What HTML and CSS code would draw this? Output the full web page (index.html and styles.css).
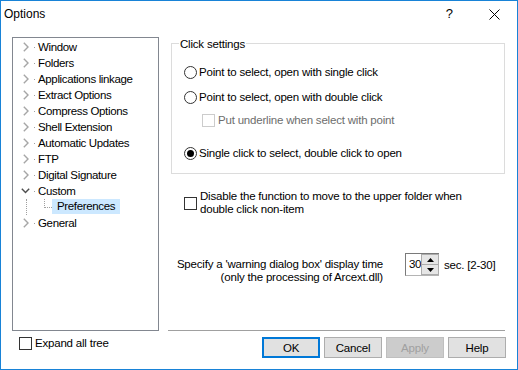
FILE: index.html
```html
<!DOCTYPE html>
<html>
<head>
<meta charset="utf-8">
<link rel="stylesheet" href="styles.css">
</head>
<body>
<div class="window">
  <div class="titlebar">
    <span class="title">Options</span>
    <span class="help">?</span>
    <svg class="close" width="11" height="11" viewBox="0 0 11 11"><path d="M0.5 0.5 L10.5 10.5 M10.5 0.5 L0.5 10.5" stroke="#000" stroke-width="1" fill="none"/></svg>
  </div>
  <div class="main">
    <div class="tree">
      <div class="row"><svg class="chev" width="6" height="10" viewBox="0 0 6 10"><path d="M0.8 0.8 L5 5 L0.8 9.2" stroke="#a6a6a6" stroke-width="1.4" fill="none"/></svg><span class="dot"></span><span>Window</span></div>
      <div class="row"><svg class="chev" width="6" height="10" viewBox="0 0 6 10"><path d="M0.8 0.8 L5 5 L0.8 9.2" stroke="#a6a6a6" stroke-width="1.4" fill="none"/></svg><span class="dot"></span><span>Folders</span></div>
      <div class="row"><svg class="chev" width="6" height="10" viewBox="0 0 6 10"><path d="M0.8 0.8 L5 5 L0.8 9.2" stroke="#a6a6a6" stroke-width="1.4" fill="none"/></svg><span class="dot"></span><span>Applications linkage</span></div>
      <div class="row"><svg class="chev" width="6" height="10" viewBox="0 0 6 10"><path d="M0.8 0.8 L5 5 L0.8 9.2" stroke="#a6a6a6" stroke-width="1.4" fill="none"/></svg><span class="dot"></span><span>Extract Options</span></div>
      <div class="row"><svg class="chev" width="6" height="10" viewBox="0 0 6 10"><path d="M0.8 0.8 L5 5 L0.8 9.2" stroke="#a6a6a6" stroke-width="1.4" fill="none"/></svg><span class="dot"></span><span>Compress Options</span></div>
      <div class="row"><svg class="chev" width="6" height="10" viewBox="0 0 6 10"><path d="M0.8 0.8 L5 5 L0.8 9.2" stroke="#a6a6a6" stroke-width="1.4" fill="none"/></svg><span class="dot"></span><span>Shell Extension</span></div>
      <div class="row"><svg class="chev" width="6" height="10" viewBox="0 0 6 10"><path d="M0.8 0.8 L5 5 L0.8 9.2" stroke="#a6a6a6" stroke-width="1.4" fill="none"/></svg><span class="dot"></span><span>Automatic Updates</span></div>
      <div class="row"><svg class="chev" width="6" height="10" viewBox="0 0 6 10"><path d="M0.8 0.8 L5 5 L0.8 9.2" stroke="#a6a6a6" stroke-width="1.4" fill="none"/></svg><span class="dot"></span><span>FTP</span></div>
      <div class="row"><svg class="chev" width="6" height="10" viewBox="0 0 6 10"><path d="M0.8 0.8 L5 5 L0.8 9.2" stroke="#a6a6a6" stroke-width="1.4" fill="none"/></svg><span class="dot"></span><span>Digital Signature</span></div>
      <div class="row open"><svg class="chev-down" width="9" height="6" viewBox="0 0 9 6"><path d="M0.8 0.8 L4.5 4.6 L8.2 0.8" stroke="#4d4d4d" stroke-width="1.4" fill="none"/></svg><span class="dot"></span><span>Custom</span></div>
      <div class="row child"><span class="vline"></span><span class="elbow"></span><span class="sel">Preferences</span></div>
      <div class="row"><svg class="chev" width="6" height="10" viewBox="0 0 6 10"><path d="M0.8 0.8 L5 5 L0.8 9.2" stroke="#a6a6a6" stroke-width="1.4" fill="none"/></svg><span class="dot"></span><span>General</span></div>
    </div>
    <div class="pane">
      <div class="group">
        <span class="legend">Click settings</span>
        <div class="opt"><span class="radio"></span><span>Point to select, open with single click</span></div>
        <div class="opt r2"><span class="radio"></span><span>Point to select, open with double click</span></div>
        <div class="opt r3 disabled"><span class="check"></span><span>Put underline when select with point</span></div>
        <div class="opt r4"><span class="radio on"></span><span>Single click to select, double click to open</span></div>
      </div>
      <div class="opt multi"><span class="check"></span><span>Disable the function to move to the upper folder when<br>double click non-item</span></div>
      <div class="spec">
        <div class="spec-text">Specify a 'warning dialog box' display time<br>(only the processing of Arcext.dll)</div>
        <div class="spin">
          <span class="spin-edit">30</span>
          <span class="spin-btns">
            <span class="sbtn up"><svg width="7" height="4" viewBox="0 0 7 4"><path d="M3.5 0 L7 4 L0 4Z" fill="#000"/></svg></span>
            <span class="sbtn down"><svg width="7" height="4" viewBox="0 0 7 4"><path d="M0 0 L7 0 L3.5 4Z" fill="#000"/></svg></span>
          </span>
        </div>
        <span class="sec">sec. [2-30]</span>
      </div>
      <div class="sep"></div>
    </div>
  </div>
  <div class="footer">
    <div class="opt expand"><span class="check"></span><span>Expand all tree</span></div>
    <div class="buttons">
      <span class="btn default">OK</span>
      <span class="btn">Cancel</span>
      <span class="btn off">Apply</span>
      <span class="btn">Help</span>
    </div>
  </div>
</div>
</body>
</html>
```
FILE: styles.css
```css
* { box-sizing: border-box; }
body {
  margin: 0;
  font-family: "Liberation Sans", Arial, sans-serif;
  font-size: 11.5px;
  letter-spacing: -0.2px;
  color: #000;
  background: #fff;
}
.window {
  width: 518px;
  height: 370px;
  border: 1px solid #1883d7;
  background: #fff;
  display: flex;
  flex-direction: column;
}
.titlebar {
  height: 30px;
  display: flex;
  align-items: flex-start;
  padding: 5px 17px 0 3px;
  line-height: 16px;
  flex: none;
  letter-spacing: 0;
}
.title { font-size: 12px; }
.help { margin-left: auto; font-size: 13px; }
.close { margin-left: 36px; margin-top: 3px; }

.main {
  display: flex;
  padding: 6px 12px 0 11px;
  flex: none;
}
.tree {
  width: 147px;
  height: 294px;
  border: 1px solid #828790;
  padding-top: 1px;
  flex: none;
  letter-spacing: -0.35px;
}
.row {
  display: flex;
  align-items: center;
  height: 16px;
  line-height: 16px;
  padding-left: 10px;
  white-space: nowrap;
}
.chev { flex: none; }
.dot {
  width: 1px;
  height: 1px;
  background: #a0a0a0;
  margin-left: 5px;
  margin-right: 3px;
  flex: none;
}
.row.open { padding-left: 8px; }
.row.open .dot { margin-left: 4px; }
.chev-down { flex: none; }
.row.child { padding-left: 13px; align-items: flex-start; }
.vline {
  width: 1px;
  height: 16px;
  border-left: 1px dotted #a0a0a0;
  flex: none;
}
.elbow {
  width: 8px;
  height: 9px;
  border-left: 1px dotted #a0a0a0;
  border-bottom: 1px dotted #a0a0a0;
  margin-left: 17px;
  flex: none;
}
.sel {
  background: #cce8ff;
  height: 15px;
  line-height: 15px;
  padding: 0 5px;
}

.pane {
  flex: 1;
  margin-left: 9px;
  height: 294px;
  display: flex;
  flex-direction: column;
}
.group {
  position: relative;
  margin: 6px 0 0 3px;
  height: 131px;
  border: 1px solid #dcdcdc;
  padding: 20px 0 0 12px;
  flex: none;
}
.legend {
  position: absolute;
  top: -8px;
  left: 7px;
  padding: 0 1px;
  background: #fff;
  line-height: 16px;
}
.opt {
  display: flex;
  align-items: center;
  height: 16px;
  line-height: 16px;
  white-space: nowrap;
}
.radio {
  width: 13px;
  height: 13px;
  border: 1px solid #333;
  border-radius: 50%;
  margin-right: 2px;
  flex: none;
  display: flex;
  align-items: center;
  justify-content: center;
}
.radio.on::after {
  content: "";
  width: 7px;
  height: 7px;
  border-radius: 50%;
  background: #000;
}
.check {
  width: 13px;
  height: 13px;
  border: 1px solid #333;
  background: #fff;
  margin-right: 3px;
  flex: none;
}
.r2 { margin-top: 9px; }
.r3 { margin-top: 7px; padding-left: 18px; }
.r4 { margin-top: 17px; }
.disabled { color: #6d6d6d; }
.disabled .check { border-color: #cccccc; }

.opt.multi {
  height: auto;
  line-height: 13px;
  margin-top: 16px;
  padding-left: 16px;
}
.spec {
  display: flex;
  align-items: flex-start;
  margin-top: 37px;
}
.spec-text {
  width: 215px;
  text-align: right;
  line-height: 13px;
  margin-top: 5px;
  white-space: nowrap;
  flex: none;
}
.spin {
  display: flex;
  margin-left: 22px;
  height: 23px;
  border-top: 1px solid #7a7a7a;
  border-left: 1px solid #7a7a7a;
  border-bottom: 1px solid #b4b4b4;
}
.spin-edit {
  width: 15px;
  padding-left: 3px;
  line-height: 20px;
  letter-spacing: -0.5px;
}
.spin-btns {
  display: flex;
  flex-direction: column;
  width: 18px;
}
.sbtn {
  flex: 1;
  background: #e6e6e6;
  border: 1px solid #acacac;
  display: flex;
  align-items: center;
  justify-content: center;
}
.sbtn.down { border-top: none; }
.sec {
  margin-left: 5px;
  line-height: 16px;
  margin-top: 4px;
}
.sep {
  margin-top: auto;
  border-top: 1px solid #a0a0a0;
  height: 1px;
}

.footer {
  display: flex;
  align-items: flex-start;
  padding: 6px 11px 0 18px;
}
.expand { height: 13px; line-height: 13px; }
.buttons {
  margin-left: auto;
  display: flex;
  gap: 4px;
}
.btn {
  width: 58px;
  height: 21px;
  border: 1px solid #adadad;
  background: #e1e1e1;
  display: flex;
  align-items: center;
  justify-content: center;
  line-height: 16px;
}
.btn.default { border: 2px solid #0078d7; }
.btn.off {
  background: #cccccc;
  border-color: #bfbfbf;
  color: #a0a0a0;
}
```
